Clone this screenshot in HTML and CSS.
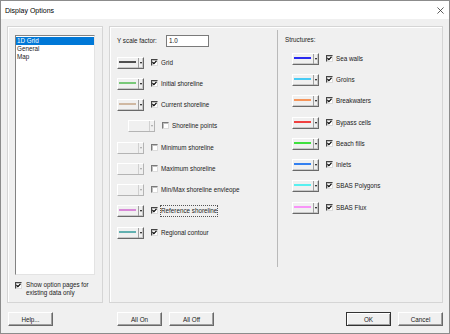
FILE: index.html
```html
<!DOCTYPE html>
<html lang="en">
<head>
  <meta charset="UTF-8" />
  <title>Display Options</title>
  <link rel="stylesheet" href="styles.css">
</head>
<body>
  <div class="dialog">
    <div class="titlebar">
      <span class="title">Display Options</span>
      <svg class="close" viewBox="0 0 8 8"><path d="M0.5 0.5 7.5 7.5M7.5 0.5 0.5 7.5"/></svg>
    </div>

    <div class="content">
      <div class="panels">
        <!-- pages list -->
        <div class="group pages">
          <ul class="listbox">
            <li class="sel">1D Grid</li>
            <li>General</li>
            <li>Map</li>
          </ul>
          <div class="check-line">
            <span class="cb on"><svg viewBox="0 0 5 5"><path d="M0.5 2.2 1.9 3.7 4.5 0.9"/></svg></span>
            <span class="txt">Show option pages for<br>existing data only</span>
          </div>
        </div>

        <!-- options for the 1D grid page -->
        <div class="group options">
          <div class="col col-left">
            <div class="head">
              <span class="scale-lbl">Y scale factor:</span>
              <span class="edit">1.0</span>
            </div>

            <div class="row">
              <span class="ls c-grid"><i class="ln"></i><b class="dd"></b></span>
              <span class="cb on"><svg viewBox="0 0 5 5"><path d="M0.5 2.2 1.9 3.7 4.5 0.9"/></svg></span>
              <span class="lbl">Grid</span>
            </div>
            <div class="row">
              <span class="ls c-initial"><i class="ln"></i><b class="dd"></b></span>
              <span class="cb on"><svg viewBox="0 0 5 5"><path d="M0.5 2.2 1.9 3.7 4.5 0.9"/></svg></span>
              <span class="lbl">Initial shoreline</span>
            </div>
            <div class="row">
              <span class="ls c-current"><i class="ln"></i><b class="dd"></b></span>
              <span class="cb on"><svg viewBox="0 0 5 5"><path d="M0.5 2.2 1.9 3.7 4.5 0.9"/></svg></span>
              <span class="lbl">Current shoreline</span>
            </div>
            <div class="row sub">
              <span class="ls off"><i class="ln"></i><b class="dd"></b></span>
              <span class="cb"></span>
              <span class="lbl">Shoreline points</span>
            </div>
            <div class="row">
              <span class="ls off"><i class="ln"></i><b class="dd"></b></span>
              <span class="cb"></span>
              <span class="lbl">Minimum shoreline</span>
            </div>
            <div class="row">
              <span class="ls off"><i class="ln"></i><b class="dd"></b></span>
              <span class="cb"></span>
              <span class="lbl">Maximum shoreline</span>
            </div>
            <div class="row">
              <span class="ls off"><i class="ln"></i><b class="dd"></b></span>
              <span class="cb"></span>
              <span class="lbl">Min/Max shoreline envleope</span>
            </div>
            <div class="row">
              <span class="ls c-reference"><i class="ln"></i><b class="dd"></b></span>
              <span class="cb on"><svg viewBox="0 0 5 5"><path d="M0.5 2.2 1.9 3.7 4.5 0.9"/></svg></span>
              <span class="lbl focus">Reference shoreline</span>
            </div>
            <div class="row">
              <span class="ls c-regional"><i class="ln"></i><b class="dd"></b></span>
              <span class="cb on"><svg viewBox="0 0 5 5"><path d="M0.5 2.2 1.9 3.7 4.5 0.9"/></svg></span>
              <span class="lbl">Regional contour</span>
            </div>
          </div>

          <div class="divider"></div>

          <div class="col col-right">
            <div class="head head-struct">Structures:</div>

            <div class="row">
              <span class="ls c-seawall"><i class="ln"></i><b class="dd"></b></span>
              <span class="cb on"><svg viewBox="0 0 5 5"><path d="M0.5 2.2 1.9 3.7 4.5 0.9"/></svg></span>
              <span class="lbl">Sea walls</span>
            </div>
            <div class="row">
              <span class="ls c-groin"><i class="ln"></i><b class="dd"></b></span>
              <span class="cb on"><svg viewBox="0 0 5 5"><path d="M0.5 2.2 1.9 3.7 4.5 0.9"/></svg></span>
              <span class="lbl">Groins</span>
            </div>
            <div class="row">
              <span class="ls c-breakwater"><i class="ln"></i><b class="dd"></b></span>
              <span class="cb on"><svg viewBox="0 0 5 5"><path d="M0.5 2.2 1.9 3.7 4.5 0.9"/></svg></span>
              <span class="lbl">Breakwaters</span>
            </div>
            <div class="row">
              <span class="ls c-bypass"><i class="ln"></i><b class="dd"></b></span>
              <span class="cb on"><svg viewBox="0 0 5 5"><path d="M0.5 2.2 1.9 3.7 4.5 0.9"/></svg></span>
              <span class="lbl">Bypass cells</span>
            </div>
            <div class="row">
              <span class="ls c-beachfill"><i class="ln"></i><b class="dd"></b></span>
              <span class="cb on"><svg viewBox="0 0 5 5"><path d="M0.5 2.2 1.9 3.7 4.5 0.9"/></svg></span>
              <span class="lbl">Beach fills</span>
            </div>
            <div class="row">
              <span class="ls c-inlet"><i class="ln"></i><b class="dd"></b></span>
              <span class="cb on"><svg viewBox="0 0 5 5"><path d="M0.5 2.2 1.9 3.7 4.5 0.9"/></svg></span>
              <span class="lbl">Inlets</span>
            </div>
            <div class="row">
              <span class="ls c-polygon"><i class="ln"></i><b class="dd"></b></span>
              <span class="cb on"><svg viewBox="0 0 5 5"><path d="M0.5 2.2 1.9 3.7 4.5 0.9"/></svg></span>
              <span class="lbl">SBAS Polygons</span>
            </div>
            <div class="row">
              <span class="ls c-flux"><i class="ln"></i><b class="dd"></b></span>
              <span class="cb on"><svg viewBox="0 0 5 5"><path d="M0.5 2.2 1.9 3.7 4.5 0.9"/></svg></span>
              <span class="lbl">SBAS Flux</span>
            </div>
          </div>
        </div>
      </div>

      <div class="buttons">
        <button type="button" class="btn">Help...</button>
        <button type="button" class="btn all-on">All On</button>
        <button type="button" class="btn">All Off</button>
        <button type="button" class="btn ok default">OK</button>
        <button type="button" class="btn">Cancel</button>
      </div>
    </div>
  </div>
</body>
</html>
```

FILE: styles.css
```css
:root {
  --face: #f0f0f0;
  --text: #1a1a1a;
  --etch: #d5d5d5;
  --shadow: #a0a0a0;
  --dark: #696969;
  --select: #0078d7;
}

body {
  margin: 0;
  font-family: "Liberation Sans", Arial, sans-serif;
  font-size: 6.3px;
  color: var(--text);
}

.dialog {
  width: 450px;
  height: 334px;
  box-sizing: border-box;
  border: 1px solid #8c8c8c;
  background: var(--face);
  display: flex;
  flex-direction: column;
}

/* title bar */
.titlebar {
  height: 18px;
  background: #fff;
  display: flex;
  align-items: center;
  justify-content: space-between;
  padding: 0 5px 0 4px;
}

.title {
  font-size: 7px;
  color: #000;
}

.close {
  width: 7px;
  height: 7px;
  stroke: #333;
  stroke-width: 0.9;
  fill: none;
}

.content {
  padding: 7px 6px 0 6px;
}

.panels {
  display: flex;
  gap: 6px;
  height: 277px;
}

.group {
  box-sizing: border-box;
  border: 1px solid var(--etch);
  box-shadow: inset 1px 1px 0 #fff;
}

/* left panel */
.pages {
  width: 96px;
  padding: 8px 7px;
}

.listbox {
  list-style: none;
  margin: 0;
  padding: 1px 0 0 0;
  width: 80px;
  height: 240px;
  box-sizing: border-box;
  background: #fff;
  border: 1px solid;
  border-color: #828282 #e3e3e3 #e3e3e3 #828282;
}

.listbox li {
  height: 8px;
  line-height: 8px;
  padding-left: 1px;
}

.listbox li.sel {
  background: var(--select);
  color: #fff;
}

.check-line {
  display: flex;
  align-items: flex-start;
  gap: 4px;
  margin-top: 6px;
  line-height: 8px;
}

.check-line .cb {
  margin-top: 1px;
}

/* right panel */
.options {
  flex: 1;
  display: flex;
  padding: 2px 0 0 7px;
}

.col-left {
  width: 160px;
}

.col-right {
  flex: 1;
}

.head {
  height: 23px;
  display: flex;
  align-items: center;
}

.scale-lbl {
  width: 49px;
}

.edit {
  width: 43px;
  height: 12px;
  box-sizing: border-box;
  background: #fff;
  border: 1px solid #7a7a7a;
  line-height: 10px;
  padding-left: 2px;
}

.head-struct {
  height: 19px;
  align-items: flex-start;
  line-height: 8px;
  padding: 7px 0 0 7px;
  box-sizing: border-box;
}

.divider {
  width: 1px;
  height: 237px;
  margin-top: 1px;
  background: #b9b9b9;
}

.row {
  height: 21px;
  box-sizing: border-box;
  padding-top: 5px;
  display: flex;
  align-items: flex-start;
}

.col-left .row:nth-child(4n+1),
.col-right .row:nth-child(4n) {
  height: 22px;
}

.row.sub {
  padding-left: 11px;
}

.col-right .row {
  padding-left: 14px;
}

/* line style dropdown */
.ls {
  width: 27px;
  height: 12px;
  box-sizing: border-box;
  display: flex;
  background: var(--face);
  border: 1px solid;
  border-color: #fff var(--dark) var(--dark) #fff;
  box-shadow: inset -1px -1px 0 #c8c8c8;
  margin-right: 7px;
}

.ls .ln {
  display: block;
  width: 19px;
  padding: 3px 0 0 1px;
}

.ls .ln::before {
  content: "";
  display: block;
  width: 17px;
  height: 2px;
  background: var(--line, transparent);
}

.ls .dd {
  flex: 1;
  border-left: 1px solid var(--shadow);
  display: flex;
  justify-content: center;
  padding-top: 4px;
}

.ls .dd::before {
  content: "";
  width: 0;
  height: 0;
  border-left: 1.5px solid transparent;
  border-right: 1.5px solid transparent;
  border-top: 2px solid #000;
}

.ls.off {
  border-color: #fff #b4b4b4 #b4b4b4 #fff;
  box-shadow: none;
}

.ls.off .dd {
  border-left-color: #d0d0d0;
}

.ls.off .dd::before {
  border-top-color: #a0a0a0;
}

.c-grid { --line: #505050; }
.c-initial { --line: #78c878; }
.c-current { --line: #cfb8a2; }
.c-reference { --line: #d88ad8; }
.c-regional { --line: #62b0b0; }
.c-seawall { --line: #2a2af0; }
.c-groin { --line: #48cbf4; }
.c-breakwater { --line: #f6955a; }
.c-bypass { --line: #f04040; }
.c-beachfill { --line: #3ee03e; }
.c-inlet { --line: #3380f0; }
.c-polygon { --line: #58f0f0; }
.c-flux { --line: #f894f8; }

/* checkbox */
.cb {
  width: 7px;
  height: 7px;
  margin-top: 2px;
  box-sizing: border-box;
  flex-shrink: 0;
  background: #fff;
  border: 1px solid;
  border-color: #7a7a7a #dcdcdc #dcdcdc #7a7a7a;
  box-shadow: inset 1px 1px 0 #c0c0c0;
  display: flex;
}

.cb.on {
  border-color: #444 #dcdcdc #dcdcdc #444;
}

.cb svg {
  width: 5px;
  height: 5px;
  fill: none;
  stroke: #000;
  stroke-width: 1.2;
}

.lbl {
  margin-left: 3px;
  margin-top: 1px;
  line-height: 10px;
}

.lbl.focus {
  outline: 1px dotted #555;
  outline-offset: 0;
}

/* bottom buttons */
.buttons {
  display: flex;
  gap: 7px;
  margin-top: 9px;
  padding-left: 1px;
}

.btn {
  width: 45px;
  height: 14px;
  box-sizing: border-box;
  padding: 0;
  font: inherit;
  color: var(--text);
  background: var(--face);
  border: 1px solid;
  border-color: #fff var(--dark) var(--dark) #fff;
  box-shadow: inset -1px -1px 0 var(--shadow);
}

.btn.all-on {
  margin-left: 57px;
}

.btn.ok {
  margin-left: auto;
}

.btn.default {
  border-color: #333;
  box-shadow: inset 1px 1px 0 #fff, inset -1px -1px 0 var(--shadow);
}
```
